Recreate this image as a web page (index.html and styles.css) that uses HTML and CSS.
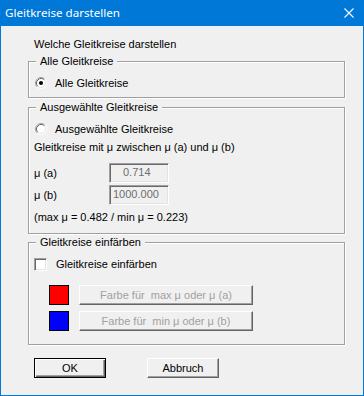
FILE: index.html
```html
<!DOCTYPE html>
<html>
<head>
<meta charset="utf-8">
<link rel="stylesheet" href="styles.css">
</head>
<body>
<div class="window">
  <div class="titlebar">
    <span class="title">Gleitkreise darstellen</span>
    <svg class="close" width="10" height="10" viewBox="0 0 10 10"><path d="M0.5 0.5 L9.5 9.5 M9.5 0.5 L0.5 9.5" stroke="#fff" stroke-width="1.1" fill="none"/></svg>
  </div>
  <div class="content">
    <div class="intro">Welche Gleitkreise darstellen</div>

    <div class="group g1">
      <span class="legend">Alle Gleitkreise</span>
      <div class="option">
        <svg class="radio" width="12" height="12" viewBox="0 0 12 12">
          <circle cx="6" cy="6" r="5" fill="#fff"/>
          <path d="M2.11 9.89 A5.5 5.5 0 0 1 9.89 2.11" stroke="#a0a0a0" fill="none"/>
          <path d="M9.89 2.11 A5.5 5.5 0 0 1 2.11 9.89" stroke="#ffffff" fill="none"/>
          <path d="M2.82 9.18 A4.5 4.5 0 0 1 9.18 2.82" stroke="#696969" fill="none"/>
          <path d="M9.18 2.82 A4.5 4.5 0 0 1 2.82 9.18" stroke="#e3e3e3" fill="none"/>
          <circle cx="6" cy="6" r="2" fill="#000"/>
        </svg>
        <span class="optlabel">Alle Gleitkreise</span>
      </div>
    </div>

    <div class="group g2">
      <span class="legend">Ausgewählte Gleitkreise</span>
      <div class="option">
        <svg class="radio" width="12" height="12" viewBox="0 0 12 12">
          <circle cx="6" cy="6" r="5" fill="#fff"/>
          <path d="M2.11 9.89 A5.5 5.5 0 0 1 9.89 2.11" stroke="#a0a0a0" fill="none"/>
          <path d="M9.89 2.11 A5.5 5.5 0 0 1 2.11 9.89" stroke="#ffffff" fill="none"/>
          <path d="M2.82 9.18 A4.5 4.5 0 0 1 9.18 2.82" stroke="#696969" fill="none"/>
          <path d="M9.18 2.82 A4.5 4.5 0 0 1 2.82 9.18" stroke="#e3e3e3" fill="none"/>
        </svg>
        <span class="optlabel">Ausgewählte Gleitkreise</span>
      </div>
      <div class="text t1">Gleitkreise mit μ zwischen μ (a) und μ (b)</div>
      <div class="field f1">
        <span class="flabel">μ (a)</span>
        <span class="input in1">0.714</span>
      </div>
      <div class="field f2">
        <span class="flabel">μ (b)</span>
        <span class="input in2">1000.000</span>
      </div>
      <div class="text t2">(max μ = 0.482 / min μ = 0.223)</div>
    </div>

    <div class="group g3">
      <span class="legend">Gleitkreise einfärben</span>
      <div class="option">
        <span class="checkbox"></span>
        <span class="optlabel cl">Gleitkreise einfärben</span>
      </div>
      <div class="colorrow r1">
        <span class="swatch red"></span>
        <span class="btn disabled wide">Farbe für&nbsp; max μ oder μ (a)</span>
      </div>
      <div class="colorrow r2">
        <span class="swatch blue"></span>
        <span class="btn disabled wide">Farbe für&nbsp; min μ oder μ (b)</span>
      </div>
    </div>

    <div class="footer">
      <span class="btn default">OK</span>
      <span class="btn cancel">Abbruch</span>
    </div>
  </div>
</div>
</body>
</html>
```

FILE: styles.css
```css
* { box-sizing: border-box; }
html, body { margin: 0; padding: 0; }
body {
  width: 364px;
  height: 396px;
  font-family: "Liberation Sans", Arial, sans-serif;
  font-size: 11px;
  color: #000;
  background: #f0f0f0;
}
.window {
  width: 364px;
  height: 396px;
  border: 1px solid #0078d7;
  background: #f0f0f0;
}
.titlebar {
  height: 25px;
  background: #0078d7;
  display: flex;
  align-items: center;
  justify-content: space-between;
  padding: 0 9px 0 4px;
  margin: -1px -1px 0 -1px;
  height: 26px;
  padding-left: 5px;
}
.title {
  color: #fff;
  font-family: "Noto Sans", "Open Sans", sans-serif;
  font-size: 11.6px;
  line-height: 16px;
}
.close { display: block; margin-right: 1px; }
.content {
  padding-left: 27px;
}
.intro {
  margin-top: 12px;
  line-height: 13px;
  padding-left: 6px;
}
.group {
  position: relative;
  width: 317px;
  border: 1px solid #a0a0a0;
  box-shadow: 1px 1px 0 #fff, inset 1px 1px 0 #fff;
  padding-left: 5px;
}
.legend {
  position: absolute;
  top: -7px;
  left: 7px;
  padding: 0 4px 0 4px;
  line-height: 13px;
  background: #f0f0f0;
}
.g1 { margin-top: 10px; height: 37px; padding-top: 15px; }
.g2 { margin-top: 9px; height: 127px; padding-top: 15px; }
.g3 { margin-top: 8px; height: 103px; padding-top: 15px; }
.option {
  display: flex;
  align-items: center;
  height: 12px;
}
.radio { display: block; margin-left: 1px; flex: none; }
.optlabel { margin-left: 8px; line-height: 13px; }
.checkbox {
  display: block;
  width: 13px;
  height: 13px;
  flex: none;
  background: #fff;
  border: 1px solid;
  border-color: #a0a0a0 #fff #fff #a0a0a0;
  box-shadow: inset 1px 1px 0 #696969, inset -1px -1px 0 #e3e3e3;
}
.g3 .option { height: 13px; }
.optlabel.cl { margin-left: 9px; }
.text { line-height: 13px; }
.t1 { margin-top: 6px; }
.t2 { margin-top: 6px; }
.field {
  display: flex;
  align-items: center;
  height: 20px;
}
.f1 { margin-top: 9px; }
.f2 { margin-top: 2px; }
.flabel { width: 75px; line-height: 13px; }
.input {
  width: 60px;
  height: 20px;
  line-height: 17px;
  color: #6d6d6d;
  background: #f0f0f0;
  border: 1px solid;
  border-color: #a0a0a0 #fff #fff #a0a0a0;
  box-shadow: inset 1px 1px 0 #696969, inset -1px -1px 0 #e3e3e3;
}
.in1 { padding-left: 13px; }
.in2 { padding-left: 3px; }
.colorrow {
  display: flex;
  align-items: center;
  height: 20px;
}
.r1 { margin-top: 14px; }
.r2 { margin-top: 6px; }
.swatch {
  display: block;
  width: 20px;
  height: 20px;
  margin-left: 15px;
  border: 1px solid #000;
}
.red { background: #ff0000; }
.blue { background: #0000ff; }
.btn {
  display: flex;
  align-items: center;
  justify-content: center;
  height: 20px;
  background: #f0f0f0;
  border: 1px solid;
  border-color: #fff #646464 #646464 #fff;
  box-shadow: inset -1px -1px 0 #a0a0a0;
  line-height: 13px;
}
.wide { width: 174px; margin-left: 10px; }
.disabled { color: #a0a0a0; }
.footer {
  display: flex;
  margin-top: 13px;
  padding-left: 6px;
}
.default {
  width: 72px;
  border: 1px solid #000;
  box-shadow: inset 1px 1px 0 #fff, inset -1px -1px 0 #646464, inset -2px -2px 0 #a0a0a0;
}
.cancel { width: 72px; margin-left: 41px; }
```
